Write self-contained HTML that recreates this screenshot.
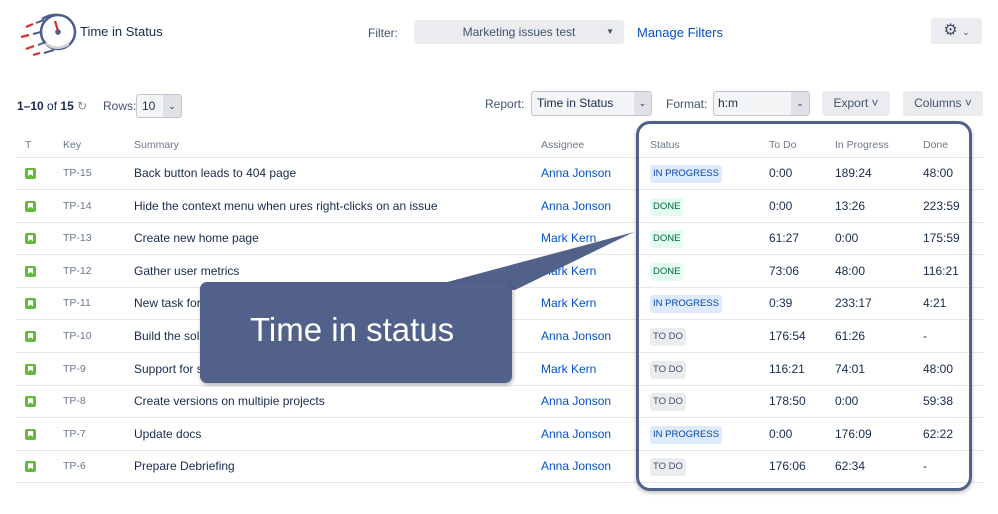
<!DOCTYPE html>
<html><head><meta charset="utf-8"><style>
*{margin:0;padding:0;box-sizing:border-box}
body{width:998px;height:514px;background:#fff;font-family:"Liberation Sans",sans-serif;position:relative;overflow:hidden;color:#172b4d}
.a{position:absolute;white-space:nowrap}
.f12{font-size:12px}
.hd{font-size:10.5px;color:#6b778c}
.k{font-size:10.5px;color:#6b778c}
.lnk{color:#0052cc}
.sel{position:absolute;background:#f4f5f7;border:1px solid #c1c7d0;border-radius:3px;font-size:12px}
.btn{position:absolute;background:#ebecf0;border-radius:3px;font-size:12px;color:#42526e;text-align:center}
.line{position:absolute;left:16px;width:968px;height:1px;background:#e6e8ec}
.lz{position:absolute;font-size:9.5px;height:18px;line-height:18px;padding:0 3px;border-radius:3px}
.ip{background:#deebff;color:#0747a6}
.dn{background:#e3fcef;color:#006644}
.td{background:#ebecf0;color:#42526e}
.ic{position:absolute;left:25px;width:11px;height:11px;background:#63ba3c;border-radius:2px}
.ic:after{content:"";position:absolute;left:3px;top:2px;width:5px;height:6px;background:#fff;clip-path:polygon(0 0,100% 0,100% 100%,50% 70%,0 100%)}
</style></head><body>
<svg class="a" style="left:16px;top:10px" width="62" height="48" viewBox="0 0 62 48">
<path d="M26 9 Q34 4 42 5" stroke="#4c5d8a" stroke-width="2.5" fill="none"/>
<circle cx="42" cy="22" r="17" fill="#fff" stroke="#4c5d8a" stroke-width="2.5"/>
<path d="M29 33 Q40 42 53 34" stroke="#d0d0d0" stroke-width="2.5" fill="none"/>
<path d="M39 11 L42 21" stroke="#e02a2a" stroke-width="2.2" fill="none"/>
<circle cx="42" cy="22" r="2.8" fill="#4c5d8a"/>
<path d="M20 13 L28 10 M17 24 L25 22 M22 35 L30 32 M28 43 L38 40" stroke="#4c5d8a" stroke-width="2"/>
<path d="M10 17 L17 14 M5 27 L13 25 M10 39 L18 36 M17 45 L24 43" stroke="#e02a2a" stroke-width="2.2"/>
</svg>
<div class="a" style="left:80px;top:24px;font-size:13px">Time in Status</div>
<div class="a f12" style="left:368px;top:26px;color:#42526e">Filter:</div>
<div class="btn" style="left:414px;top:20px;width:210px;height:24px;line-height:24px">Marketing issues test<span style="position:absolute;right:10px;font-size:8px">▼</span></div>
<div class="a lnk" style="left:637px;top:25px;font-size:13px">Manage Filters</div>
<div class="btn" style="left:931px;top:18px;width:51px;height:26px;line-height:26px;font-size:16px;color:#42526e">⚙ <span style="font-size:9px">⌄</span></div>

<div class="a f12" style="left:17px;top:99px"><b>1–10</b> of <b>15</b> <span style="color:#888">↻</span></div>
<div class="a f12" style="left:103px;top:99px;color:#42526e">Rows:</div>
<div class="sel" style="left:136px;top:94px;width:46px;height:24px;line-height:22px;padding-left:5px">10<span style="position:absolute;right:0;top:0;width:18px;height:22px;background:#dfe1e6;text-align:center;font-size:9px">⌄</span></div>
<div class="a f12" style="left:485px;top:97px;color:#42526e">Report:</div>
<div class="sel" style="left:531px;top:91px;width:121px;height:25px;line-height:23px;padding-left:5px">Time in Status<span style="position:absolute;right:0;top:0;width:17px;height:23px;background:#dfe1e6;text-align:center;font-size:9px">⌄</span></div>
<div class="a f12" style="left:666px;top:97px;color:#42526e">Format:</div>
<div class="sel" style="left:713px;top:91px;width:97px;height:25px;line-height:23px;padding-left:4px">h:m<span style="position:absolute;right:0;top:0;width:18px;height:23px;background:#dfe1e6;text-align:center;font-size:9px">⌄</span></div>
<div class="btn" style="left:822px;top:91px;width:68px;height:25px;line-height:25px">Export ˅</div>
<div class="btn" style="left:903px;top:91px;width:80px;height:25px;line-height:25px">Columns ˅</div>

<div class="a hd" style="left:25px;top:139px">T</div>
<div class="a hd" style="left:63px;top:139px">Key</div>
<div class="a hd" style="left:134px;top:139px">Summary</div>
<div class="a hd" style="left:541px;top:139px">Assignee</div>
<div class="a hd" style="left:650px;top:139px">Status</div>
<div class="a hd" style="left:769px;top:139px">To Do</div>
<div class="a hd" style="left:835px;top:139px">In Progress</div>
<div class="a hd" style="left:923px;top:139px">Done</div>

<div id="rows"></div>
<script>
var d=[["TP-15","Back button leads to 404 page","Anna Jonson","ip","IN PROGRESS","0:00","189:24","48:00"],
["TP-14","Hide the context menu when ures right-clicks on an issue","Anna Jonson","dn","DONE","0:00","13:26","223:59"],
["TP-13","Create new home page","Mark Kern","dn","DONE","61:27","0:00","175:59"],
["TP-12","Gather user metrics","Mark Kern","dn","DONE","73:06","48:00","116:21"],
["TP-11","New task for","Mark Kern","ip","IN PROGRESS","0:39","233:17","4:21"],
["TP-10","Build the sola","Anna Jonson","td","TO DO","176:54","61:26","-"],
["TP-9","Support for s","Mark Kern","td","TO DO","116:21","74:01","48:00"],
["TP-8","Create versions on multipie projects","Anna Jonson","td","TO DO","178:50","0:00","59:38"],
["TP-7","Update docs","Anna Jonson","ip","IN PROGRESS","0:00","176:09","62:22"],
["TP-6","Prepare Debriefing","Anna Jonson","td","TO DO","176:06","62:34","-"]];
var h='<div class="line" style="top:157px"></div>';
d.forEach(function(r,i){var c=173+i*32.6,t=c-7;
h+='<div class="ic" style="top:'+(c-5)+'px"></div>'+
'<div class="a k" style="left:63px;top:'+(t+1)+'px">'+r[0]+'</div>'+
'<div class="a f12" style="left:134px;top:'+t+'px">'+r[1]+'</div>'+
'<div class="a f12 lnk" style="left:541px;top:'+t+'px">'+r[2]+'</div>'+
'<div class="lz '+r[3]+'" style="left:650px;top:'+(c-8)+'px">'+r[4]+'</div>'+
'<div class="a f12" style="left:769px;top:'+t+'px">'+r[5]+'</div>'+
'<div class="a f12" style="left:835px;top:'+t+'px">'+r[6]+'</div>'+
'<div class="a f12" style="left:923px;top:'+t+'px">'+r[7]+'</div>'+
'<div class="line" style="top:'+Math.round(c+16)+'px"></div>';});
document.getElementById('rows').innerHTML=h;
</script>
<div class="a" style="left:636px;top:121px;width:336px;height:370px;border:3px solid #51618a;border-radius:14px;box-shadow:0 2px 4px rgba(0,0,0,.25)"></div>
<svg class="a" style="left:0;top:0" width="998" height="514"><path d="M440 284 L634 232 L515 290 Z" fill="#51618a"/></svg>
<div class="a" style="left:200px;top:282px;width:312px;height:101px;background:#51618a;border-radius:7px;box-shadow:1px 2px 4px rgba(0,0,0,.3)"></div>
<div class="a" style="left:250px;top:311px;font-size:33px;color:#fff">Time in status</div>
</body></html>
